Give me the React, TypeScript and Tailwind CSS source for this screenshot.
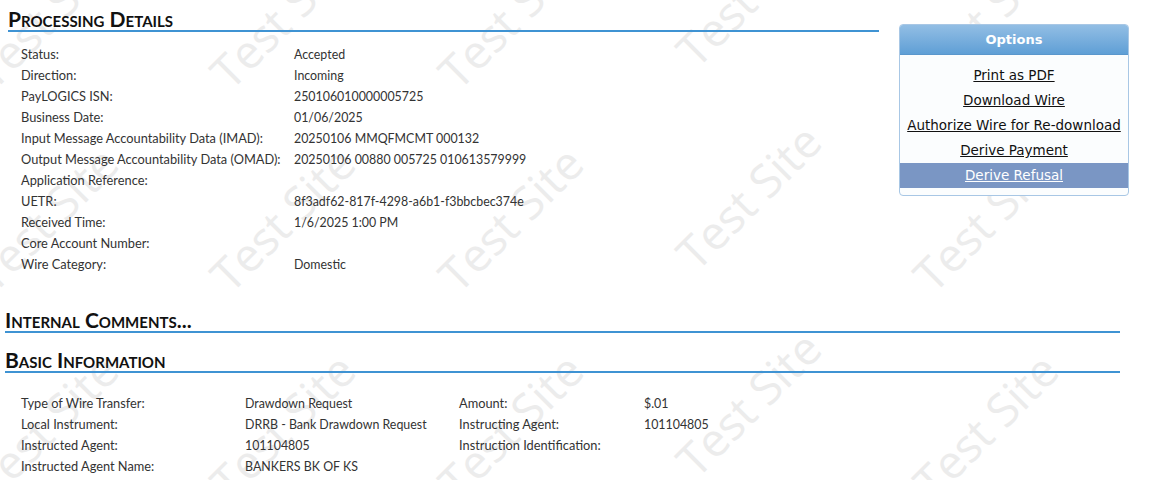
import React from "react";

const processing: [string, string][] = [
  ["Status:", "Accepted"],
  ["Direction:", "Incoming"],
  ["PayLOGICS ISN:", "250106010000005725"],
  ["Business Date:", "01/06/2025"],
  ["Input Message Accountability Data (IMAD):", "20250106 MMQFMCMT 000132"],
  ["Output Message Accountability Data (OMAD):", "20250106 00880 005725 010613579999"],
  ["Application Reference:", ""],
  ["UETR:", "8f3adf62-817f-4298-a6b1-f3bbcbec374e"],
  ["Received Time:", "1/6/2025 1:00 PM"],
  ["Core Account Number:", ""],
  ["Wire Category:", "Domestic"],
];

const basic: [string, string, string, string][] = [
  ["Type of Wire Transfer:", "Drawdown Request", "Amount:", "$.01"],
  ["Local Instrument:", "DRRB - Bank Drawdown Request", "Instructing Agent:", "101104805"],
  ["Instructed Agent:", "101104805", "Instruction Identification:", ""],
  ["Instructed Agent Name:", "BANKERS BK OF KS", "", ""],
];

const options = ["Print as PDF", "Download Wire", "Authorize Wire for Re-download", "Derive Payment"];

// watermark centres (x, y offset per column)
const cols: [number, number][] = [
  [45, 0],
  [282, 0],
  [510, 0],
  [748, -22],
  [985, 0],
];
const marks: [number, number][] = [];
[15, 218, 425].forEach((y) => {
  cols.forEach(([x, dy]) => marks.push([x, y + dy]));
});

function Heading({ children }: { children: React.ReactNode }) {
  return (
    <h2 className="border-b-2 border-[#3f93d3] font-['Lato','Open_Sans',sans-serif] text-[21px] leading-[22px] font-bold [font-variant:small-caps] text-[#111]">
      {children}
    </h2>
  );
}

export default function App() {
  return (
    <div className="relative w-[1152px] h-[480px] overflow-hidden bg-white font-['Lato','Open_Sans',sans-serif] text-[12.8px] text-[#333]">
      {/* watermark */}
      {marks.map(([x, y], i) => (
        <div
          key={i}
          className="absolute w-0 h-0 flex items-center justify-center pointer-events-none select-none"
          style={{ left: x, top: y }}
        >
          <span className="-rotate-45 whitespace-nowrap font-['Open_Sans',sans-serif] text-[46px] text-[#ececec]">
            Test Site
          </span>
        </div>
      ))}

      <div className="relative w-[1120px] pl-[5px]">
        <div className="flex items-start">
          {/* Processing details */}
          <div className="w-[871px] shrink-0 ml-[3px] pt-[8px]">
            <Heading>Processing Details</Heading>
            <div className="pl-[13px] pt-[12px]">
              {processing.map(([k, v]) => (
                <div key={k} className="flex h-[21px] leading-[21px] items-baseline">
                  <span className="w-[273px]">{k}</span>
                  <span className="text-[12.4px]">{v}</span>
                </div>
              ))}
            </div>
          </div>

          {/* Options */}
          <div className="shrink-0 ml-[20px] mt-[24px] w-[230px] rounded-[4px] border border-[#a8c7e5] bg-[#fbfdfe] overflow-hidden font-['DejaVu_Sans',sans-serif]">
            <div className="h-[30px] flex items-center justify-center bg-gradient-to-b from-[#92bee4] to-[#5f9fd6] border-b border-[#5a97cc] text-white text-[13px] font-bold">
              Options
            </div>
            <div className="pt-[8px] pb-[7px] text-[13.5px] text-[#111]">
              {options.map((o) => (
                <div key={o} className="h-[25px] flex items-center justify-center whitespace-nowrap">
                  <a className="underline cursor-pointer">{o}</a>
                </div>
              ))}
              <div className="h-[25px] flex items-center justify-center bg-[#7a96c4]">
                <a className="underline text-white cursor-pointer">Derive Refusal</a>
              </div>
            </div>
          </div>
        </div>

        <div className="mt-[34px]">
          <Heading>Internal Comments...</Heading>
        </div>
        <div className="mt-[16px]">
          <Heading>Basic Information</Heading>
        </div>
        <div className="pl-[16px] pt-[20px]">
          {basic.map(([a, b, c, d]) => (
            <div key={a} className="flex h-[21px] leading-[21px] items-baseline">
              <span className="w-[224px]">{a}</span>
              <span className="w-[214px] text-[12.4px]">{b}</span>
              <span className="w-[185px]">{c}</span>
              <span className="text-[12.4px]">{d}</span>
            </div>
          ))}
        </div>
      </div>
    </div>
  );
}
